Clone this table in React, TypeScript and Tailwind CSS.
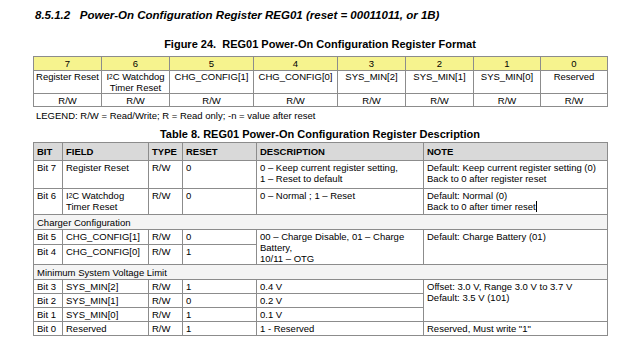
import React from 'react';

const bd = 'border border-[#8c8c8c]';

interface Row {
  bit: string;
  field: string;
  reset: string;
  desc: string;
}

function I2C() {
  return (
    <>
      I<sup className="text-[6.5px] relative -top-[1px]">2</sup>C Watchdog
    </>
  );
}

export default function App() {
  const bits = ['7', '6', '5', '4', '3', '2', '1', '0'];
  const widths = [68, 68, 84, 84, 68, 68, 67, 67];
  const names: React.ReactNode[] = [
    'Register Reset',
    <>
      <I2C />
      <br />
      Timer Reset
    </>,
    'CHG_CONFIG[1]',
    'CHG_CONFIG[0]',
    'SYS_MIN[2]',
    'SYS_MIN[1]',
    'SYS_MIN[0]',
    'Reserved',
  ];

  const sysRows: Row[] = [
    { bit: 'Bit 3', field: 'SYS_MIN[2]', reset: '1', desc: '0.4 V' },
    { bit: 'Bit 2', field: 'SYS_MIN[1]', reset: '0', desc: '0.2 V' },
    { bit: 'Bit 1', field: 'SYS_MIN[0]', reset: '1', desc: '0.1 V' },
  ];

  const cell = `${bd} px-[3px] pt-[1px] pb-0 align-top text-left leading-[11px]`;

  return (
    <div
      className="w-[640px] h-[350px] bg-white text-black overflow-hidden pl-[33px] pt-[8px]"
      style={{ fontFamily: '"Liberation Sans", Arial, sans-serif' }}
    >
      {/* Section heading */}
      <h1 className="text-[11.5px] font-bold italic leading-[14px] pl-[2px]">
        8.5.1.2&nbsp;&nbsp;&nbsp;Power-On Configuration Register REG01 (reset = 00011011, or 1B)
      </h1>

      <div className="w-[574px] text-center text-[11px] font-bold leading-[14px] mt-[15px]">
        Figure 24.&nbsp; REG01 Power-On Configuration Register Format
      </div>

      {/* Register format */}
      <table className="table-fixed border-collapse w-[574px] text-[9.5px] mt-[5px]">
        <colgroup>
          {widths.map((w, i) => (
            <col key={i} style={{ width: w }} />
          ))}
        </colgroup>
        <tbody>
          <tr className="h-[14px] bg-[#f6f38e]">
            {bits.map((b) => (
              <td key={b} className={`${bd} text-center leading-[11px] p-0`}>
                {b}
              </td>
            ))}
          </tr>
          <tr className="h-[23px]">
            {names.map((n, i) => (
              <td key={i} className={`${bd} text-center align-top leading-[11px] p-0`}>
                {n}
              </td>
            ))}
          </tr>
          <tr className="h-[13px]">
            {bits.map((b) => (
              <td key={b} className={`${bd} text-center leading-[11px] p-0`}>
                R/W
              </td>
            ))}
          </tr>
        </tbody>
      </table>
      <div className="text-[9.5px] leading-[12px] mt-[3px] pl-[3px]">
        LEGEND: R/W = Read/Write; R = Read only; -n = value after reset
      </div>

      <div className="w-[574px] text-center text-[11px] font-bold leading-[14px] mt-[5px]">
        Table 8. REG01 Power-On Configuration Register Description
      </div>

      {/* Description table */}
      <table className="table-fixed border-collapse w-[574px] text-[9.5px] mt-[1px]">
        <colgroup>
          <col style={{ width: 29 }} />
          <col style={{ width: 86 }} />
          <col style={{ width: 34 }} />
          <col style={{ width: 74 }} />
          <col style={{ width: 167 }} />
          <col style={{ width: 184 }} />
        </colgroup>
        <thead>
          <tr className="h-[18px] bg-[#d9d9d9]">
            {['BIT', 'FIELD', 'TYPE', 'RESET', 'DESCRIPTION', 'NOTE'].map((h) => (
              <th key={h} className={`${bd} px-[3px] py-0 text-left align-middle leading-[11px] font-bold`}>
                {h}
              </th>
            ))}
          </tr>
        </thead>
        <tbody>
          <tr className="h-[28px]">
            <td className={cell}>Bit 7</td>
            <td className={cell}>Register Reset</td>
            <td className={cell}>R/W</td>
            <td className={cell}>0</td>
            <td className={cell}>
              0 – Keep current register setting,
              <br />1 – Reset to default
            </td>
            <td className={cell}>
              Default: Keep current register setting (0)
              <br />
              Back to 0 after register reset
            </td>
          </tr>
          <tr className="h-[26px]">
            <td className={cell}>Bit 6</td>
            <td className={cell}>
              <I2C />
              <br />
              Timer Reset
            </td>
            <td className={cell}>R/W</td>
            <td className={cell}>0</td>
            <td className={cell}>0 – Normal ; 1 – Reset</td>
            <td className={cell}>
              Default: Normal (0)
              <br />
              Back to 0 after timer reset
              <span className="inline-block w-px h-[11px] bg-black align-top" />
            </td>
          </tr>
          <tr className="h-[15px] bg-[#f4f4f4]">
            <td colSpan={6} className={`${bd} px-[3px] py-0 align-middle leading-[11px]`}>
              Charger Configuration
            </td>
          </tr>
          <tr className="h-[13px]">
            <td className={cell}>Bit 5</td>
            <td className={cell}>CHG_CONFIG[1]</td>
            <td className={cell}>R/W</td>
            <td className={cell}>0</td>
            <td rowSpan={2} className={cell}>
              00 – Charge Disable, 01 – Charge
              <br />
              Battery,
              <br />
              10/11 – OTG
            </td>
            <td rowSpan={2} className={cell}>
              Default: Charge Battery (01)
            </td>
          </tr>
          <tr className="h-[18px]">
            <td className={cell}>Bit 4</td>
            <td className={cell}>CHG_CONFIG[0]</td>
            <td className={cell}>R/W</td>
            <td className={cell}>1</td>
          </tr>
          <tr className="h-[15px] bg-[#f4f4f4]">
            <td colSpan={6} className={`${bd} px-[3px] py-0 align-middle leading-[11px]`}>
              Minimum System Voltage Limit
            </td>
          </tr>
          {sysRows.map((r, i) => (
            <tr key={r.bit} className="h-[14px]">
              <td className={cell}>{r.bit}</td>
              <td className={cell}>{r.field}</td>
              <td className={cell}>R/W</td>
              <td className={cell}>{r.reset}</td>
              <td className={cell}>{r.desc}</td>
              {i === 0 && (
                <td rowSpan={3} className={cell}>
                  Offset: 3.0 V, Range 3.0 V to 3.7 V
                  <br />
                  Default: 3.5 V (101)
                </td>
              )}
            </tr>
          ))}
          <tr className="h-[14px]">
            <td className={cell}>Bit 0</td>
            <td className={cell}>Reserved</td>
            <td className={cell}>R/W</td>
            <td className={cell}>1</td>
            <td className={cell}>1 - Reserved</td>
            <td className={cell}>Reserved, Must write "1"</td>
          </tr>
        </tbody>
      </table>
    </div>
  );
}
